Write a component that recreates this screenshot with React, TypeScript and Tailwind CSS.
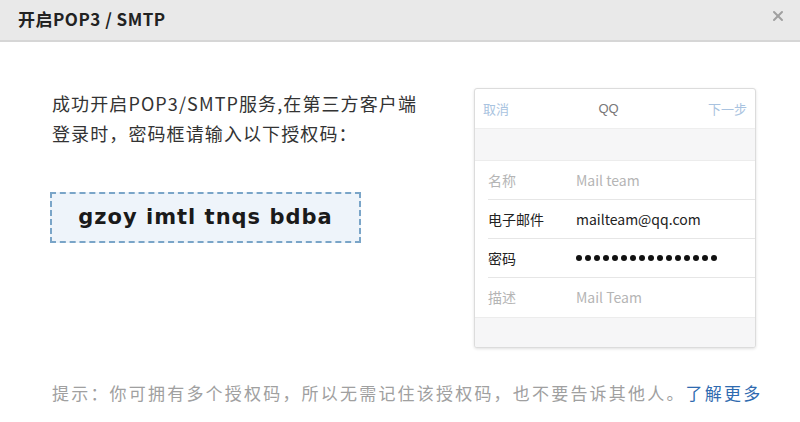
import { X } from "lucide-react";

const cjk = { fontFamily: '"Noto Sans CJK SC", "Noto Sans", sans-serif' };

function Row({ label, value, dim, last }: { label: string; value: string; dim?: boolean; last?: boolean }) {
  return (
    <div className={`ml-[13px] h-[39px] flex items-center ${last ? "" : "border-b border-[#e6e6e6]"}`}>
      <span className={`w-[88px] text-[14px] ${dim ? "text-[#b5b5b5]" : "text-[#222]"}`}>{label}</span>
      <span className={`text-[14px] ${dim ? "text-[#b5b5b5]" : "text-[#222]"}`}>{value}</span>
    </div>
  );
}

export default function App() {
  return (
    <div className="w-[800px] h-[422px] bg-white overflow-hidden" style={cjk}>
      {/* Header */}
      <div className="h-[42px] bg-[#e9e9e9] border-b-2 border-[#d6d6d6] flex items-center justify-between pl-[18px] pr-[14px]">
        <h1 className="text-[17px] font-bold text-[#222] tracking-[0.5px] mb-[3px]">开启POP3 / SMTP</h1>
        <X className="w-[16px] h-[16px] text-[#a0a0a0] mb-[8px]" strokeWidth={3} />
      </div>

      {/* Body */}
      <div className="flex pl-[52px] pt-[46px]">
        <div className="w-[400px]">
          <p className="text-[18px] leading-[30px] text-[#333] tracking-[1.1px]">
            成功开启POP3/SMTP服务,在第三方客户端
            <br />
            登录时，密码框请输入以下授权码：
          </p>
          <div className="mt-[44px] ml-[-2px] w-[311px] h-[51px] border-2 border-dashed border-[#7aa5c8] bg-[#eef4fa] flex items-center justify-center">
            <span
              className="text-[21px] font-bold text-[#1a1a1a] tracking-[1px]"
              style={{ fontFamily: '"DejaVu Sans", sans-serif' }}
            >
              gzoy imtl tnqs bdba
            </span>
          </div>
        </div>

        {/* Phone mockup */}
        <div className="ml-[22px] w-[282px] h-[260px] border border-[#dcdcdc] rounded-[3px] shadow-[0_1px_3px_rgba(0,0,0,0.12)] bg-white overflow-hidden flex flex-col">
          <div className="h-[40px] flex items-center justify-between px-[8px] border-b border-[#eee]">
            <span className="text-[13px] text-[#a9c3e0]">取消</span>
            <span className="text-[13px] text-[#777] font-medium" style={{ fontFamily: '"Liberation Sans", sans-serif' }}>QQ</span>
            <span className="text-[13px] text-[#a9c3e0]">下一步</span>
          </div>
          <div className="h-[32px] bg-[#f6f6f7] border-b border-[#ececec]" />
          <Row label="名称" value="Mail team" dim />
          <Row label="电子邮件" value="mailteam@qq.com" />
          <div className="ml-[13px] h-[39px] flex items-center border-b border-[#e6e6e6]">
            <span className="w-[88px] text-[14px] text-[#222]">密码</span>
            <div className="flex gap-[3px]">
              {Array.from({ length: 16 }).map((_, i) => (
                <span key={i} className="w-[6px] h-[6px] rounded-full bg-[#111]" />
              ))}
            </div>
          </div>
          <Row label="描述" value="Mail Team" dim last />
          <div className="flex-1 bg-[#f6f6f7] border-t border-[#ececec]" />
        </div>
      </div>

      {/* Footer tip */}
      <p className="pl-[52px] mt-[32px] text-[17px] text-[#a0a0a0] tracking-[2.2px]">
        提示：你可拥有多个授权码，所以无需记住该授权码，也不要告诉其他人。
        <span className="text-[#2f6bb0]">了解更多</span>
      </p>
    </div>
  );
}
